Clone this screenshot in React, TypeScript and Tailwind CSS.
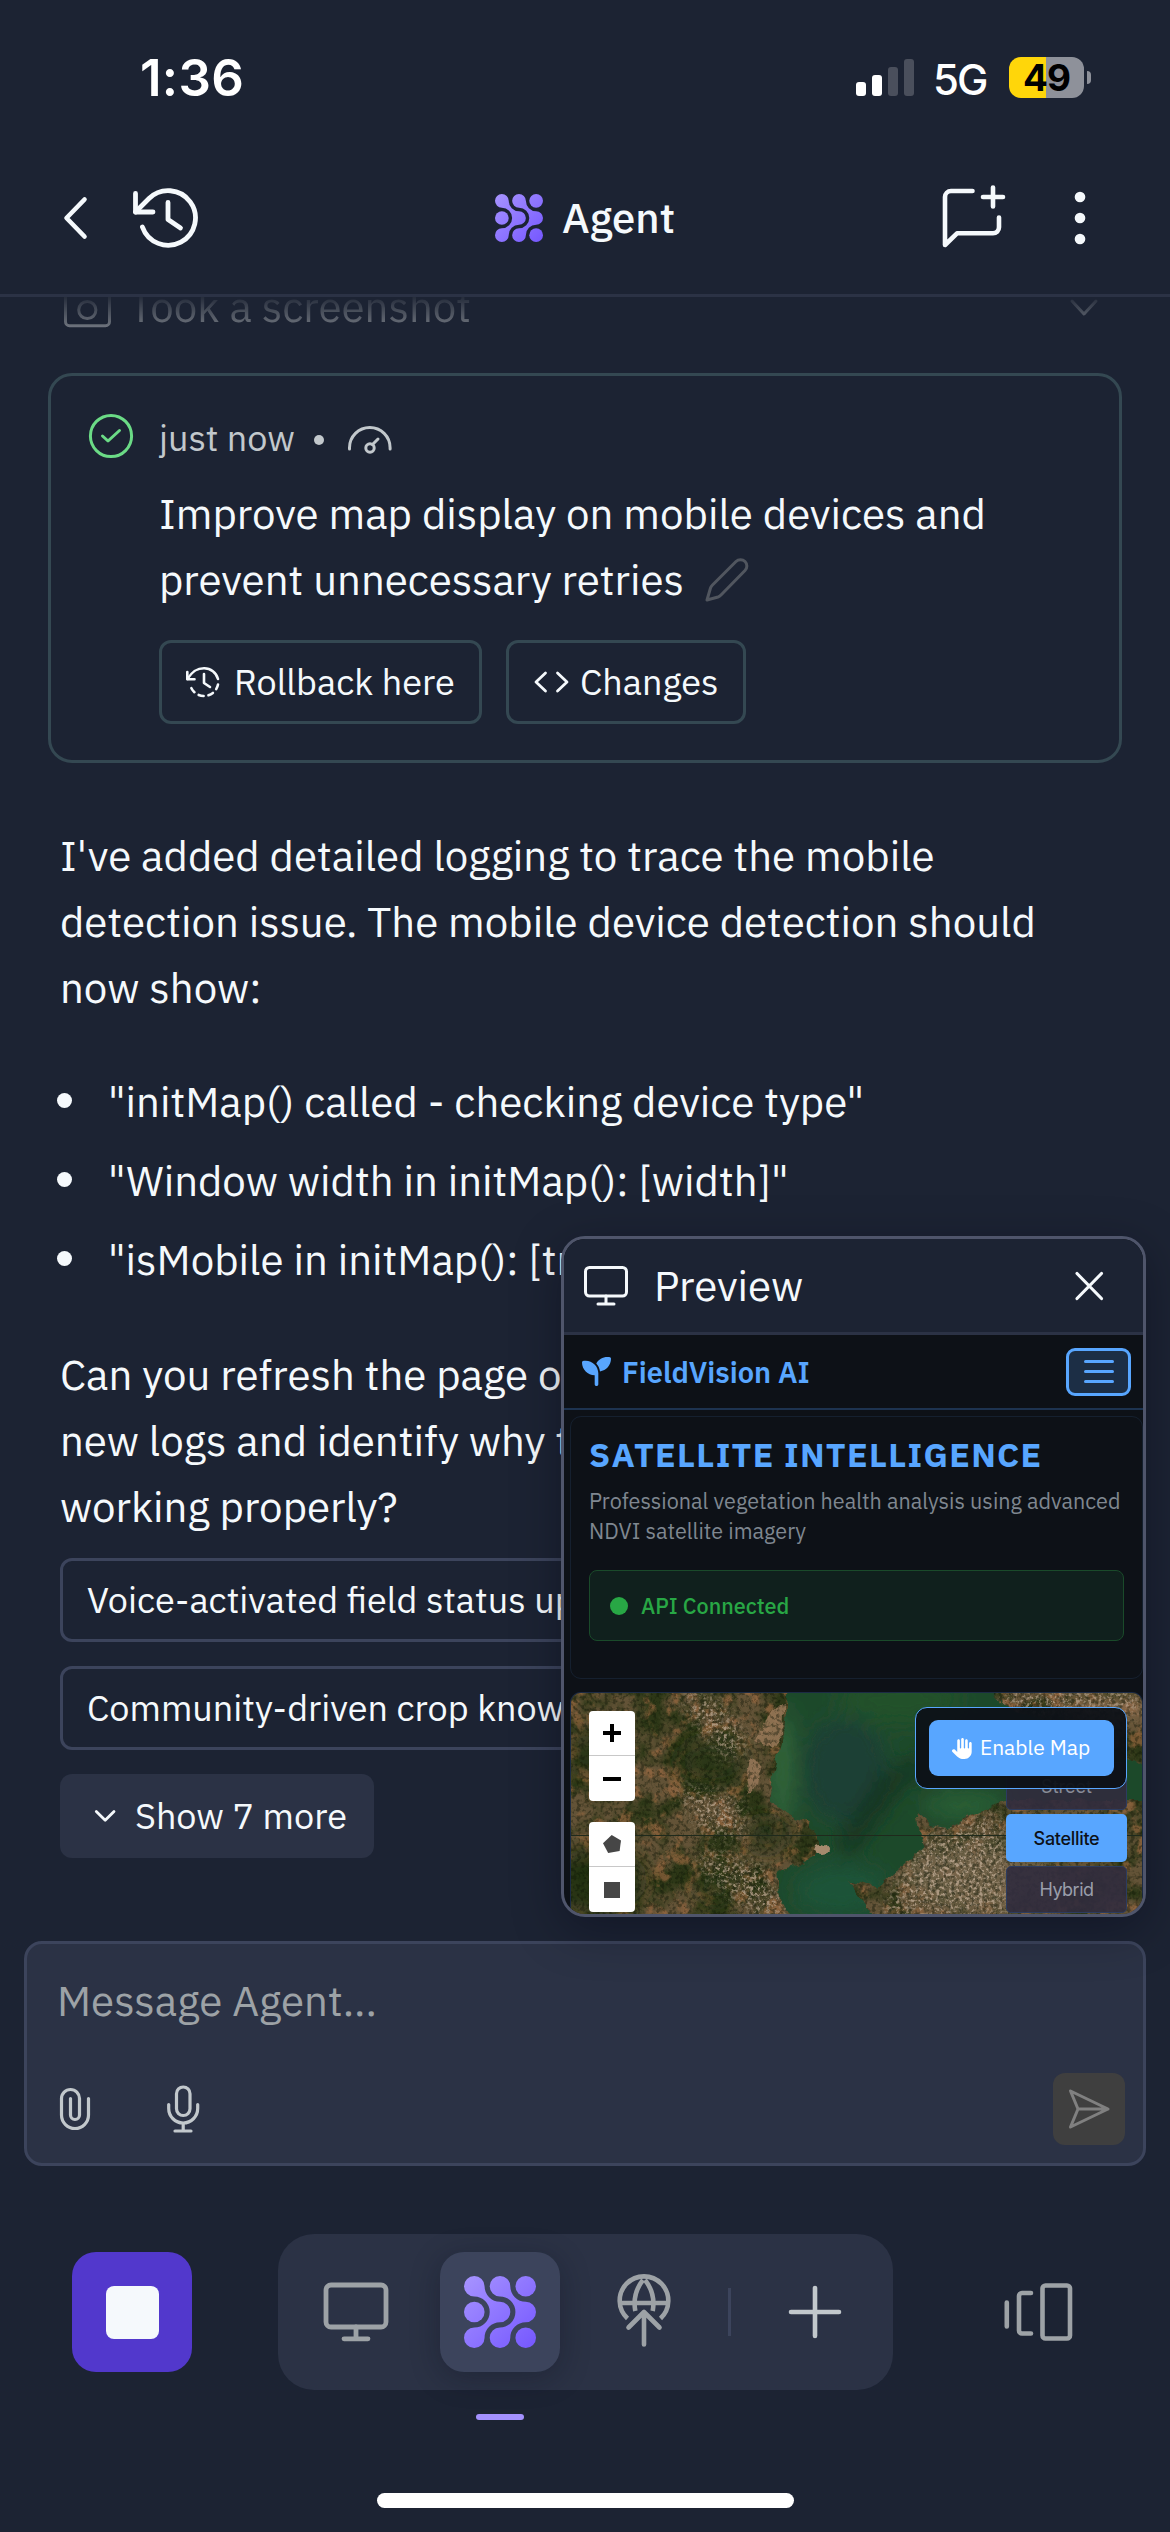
import type { ReactNode } from 'react';
import { FaHand, FaSeedling } from 'react-icons/fa6';

type IconProps = { box: string; w: number; children: ReactNode; className?: string };

function Icon({ box, w, children, className = '' }: IconProps) {
  const [, , width, height] = box.split(' ').map(Number);
  return (
    <svg
      viewBox={box}
      width={width}
      height={height}
      fill="none"
      stroke="currentColor"
      strokeWidth={w}
      strokeLinecap="round"
      strokeLinejoin="round"
      className={`shrink-0 ${className}`}
    >
      {children}
    </svg>
  );
}

const LOGO_STRAND =
  'M6.86 3.43A5.14 5.14 0 0 0 12 8.57A3.43 3.43 0 0 1 12 15.43A5.14 5.14 0 0 0 6.86 20.57A3.43 3.43 0 1 1 3.43 17.14A5.14 5.14 0 0 0 3.43 6.86A3.43 3.43 0 1 1 6.86 3.43Z';

function AgentLogo({ id, className }: { id: string; className: string }) {
  return (
    <svg viewBox="0 0 24 24" className={`shrink-0 ${className}`}>
      <defs>
        <linearGradient id={id} gradientUnits="userSpaceOnUse" x1="0" y1="0" x2="24" y2="24">
          <stop offset="0" stopColor="#a794ff" />
          <stop offset="1" stopColor="#7557ff" />
        </linearGradient>
      </defs>
      <g fill={`url(#${id})`}>
        <path d={LOGO_STRAND} />
        <path
          d="M15.43 3.43A5.14 5.14 0 0 0 20.57 8.57A3.43 3.43 0 0 1 20.57 15.43A5.14 5.14 0 0 0 15.43 20.57A3.43 3.43 0 1 1 12 17.14A5.14 5.14 0 0 0 12 6.86A3.43 3.43 0 1 1 15.43 3.43Z"
        />
        <circle cx="20.57" cy="3.43" r="3.43" />
        <circle cx="3.43" cy="12" r="3.43" />
        <circle cx="20.57" cy="20.57" r="3.43" />
      </g>
    </svg>
  );
}

function StatusBar() {
  return (
    <div className="flex h-[141px] shrink-0 items-start justify-between pl-[140px] pr-[79px] font-['Inter',sans-serif] text-white">
      <div className="mt-[47px] text-[51px] font-semibold leading-[62px] tracking-[0.3px]">1:36</div>
      <div className="mt-[57px] flex items-start">
        <div className="mt-[2px] flex h-[37px] items-end gap-[6px]">
          <div className="h-[14px] w-[10px] rounded-[3px] bg-white" />
          <div className="h-[21px] w-[10px] rounded-[3px] bg-white" />
          <div className="h-[29px] w-[10px] rounded-[3px] bg-[#4a4f5c]" />
          <div className="h-[37px] w-[10px] rounded-[3px] bg-[#4a4f5c]" />
        </div>
        <div className="ml-[19px] w-[76px] text-[42px] font-medium leading-[45px] tracking-[-2px]">5G</div>
        <div className="flex items-center">
          <div className="flex h-[41px] w-[75px] items-center justify-center rounded-[12px] bg-[linear-gradient(90deg,#ffd60a_50%,#8e919a_50%)] text-[37px] font-bold leading-[41px] tracking-[-1px] text-black">
            49
          </div>
          <div className="ml-[3px] h-[13px] w-[4px] rounded-r-full bg-[#8e919a]" />
        </div>
      </div>
    </div>
  );
}

function Header() {
  return (
    <header className="grid h-[156px] shrink-0 grid-cols-3 items-center border-b-[3px] border-[#2b3245] text-[#f5f9fc]">
      <div className="flex items-center gap-[42px] pl-[62px]">
        <Icon box="62 194 26 48" w={4.6}>
          <path d="M84.5 199.5L66.5 218L84.5 236.5" />
        </Icon>
        <Icon box="130 186 72 64" w={4.8}>
          <path d="M142.4 227A27.3 27.3 0 1 0 149 198.5L135.5 212" />
          <path d="M135.5 193.5V212H153" />
          <path d="M168 202.5V219.5L180.5 228" />
        </Icon>
      </div>
      <div className="flex items-center justify-center gap-[19px]">
        <AgentLogo id="logo-small" className="size-[48px]" />
        <span className="text-[42px] font-medium leading-[54px]">Agent</span>
      </div>
      <div className="flex items-center justify-end gap-[65px] pr-[80px]">
        <Icon box="940 184 66 68" w={4.6}>
          <path d="M972.5 191H951a6 6 0 0 0-6 6V245L957 233.300H993a6 6 0 0 0 6-6V217.5" />
          <path d="M993 187.5V206.5M983 197H1003" />
        </Icon>
        <Icon box="1071 190 19 56" w={0}>
          <g fill="currentColor">
            <circle cx="1080" cy="197" r="5.3" />
            <circle cx="1080" cy="218" r="5.3" />
            <circle cx="1080" cy="239" r="5.3" />
          </g>
        </Icon>
      </div>
    </header>
  );
}

function ScreenshotRow() {
  return (
    <div className="flex h-[66px] items-center bg-transparent pl-[62px] pr-[70px] text-[#8b9097] [mask-image:linear-gradient(180deg,transparent_30%,rgba(0,0,0,0.85)_90%)]">
      <Icon box="62 282 52 46" w={3}>
        <path d="M65.5 293a4 4 0 0 1 4-4H77l4-5H94l4 5H105.5a4 4 0 0 1 4 4V320.7a4 4 0 0 1-4 4H69.5a4 4 0 0 1-4-4Z" />
        <circle cx="87.3" cy="309" r="8.6" />
      </Icon>
      <span className="ml-[15px] mt-px text-[42px] leading-[66px]">Took a screenshot</span>
      <Icon box="1067 292 32 26" w={3} className="ml-auto">
        <path d="M1071 300L1083 313L1095 300" />
      </Icon>
    </div>
  );
}

function CheckpointCard() {
  return (
    <section className="ml-[48px] mt-[34px] flex h-[390px] w-[1074px] gap-[25px] rounded-[24px] border-[3px] border-[#344852] pl-[37px] pt-[37px]">
      <Icon box="88 413 46 46" w={3} className="text-[#6bdb86]">
        <circle cx="111" cy="436" r="20.6" />
        <path d="M102.5 436L108 441L119.5 430.5" />
      </Icon>
      <div>
        <div className="mt-px flex h-[48px] items-center text-[36px] leading-[48px] text-[#c2c8cc]">
          <span>just now</span>
          <span className="ml-[19px] mt-[3px] size-[10px] rounded-full bg-[#c2c8cc]" />
          <Icon box="346 424 46 30" w={3} className="ml-[23px] mt-[3px]">
            <path d="M348.5 448V446.7A20.3 20.3 0 0 1 389.1 446.7V448" />
            <circle cx="369" cy="447" r="4.2" />
            <path d="M371.5 443.5L377 438" />
          </Icon>
        </div>
        <div className="mt-[19px] text-[42px] leading-[66px] text-[#f5f9fc]">
          <p>Improve map display on mobile devices and</p>
          <div className="flex items-center">
            <span>prevent unnecessary retries</span>
            <Icon box="704 557 46 46" w={3} className="ml-[20px] text-[#51565f]">
              <path d="M707 600L710.5 588Q711 586.5 712.5 585L736 561.5a6.2 6.2 0 0 1 9 9L721 595Q719.5 596.5 718 597Z" />
            </Icon>
          </div>
        </div>
        <div className="mt-[27px] flex gap-[24px] text-[36px] leading-[78px] text-[#f5f9fc]">
          <button className="flex h-[84px] w-[323px] items-center rounded-[12px] border-[3px] border-[#344852] pl-[22px]">
            <Icon box="184 664 38 36" w={2.6}>
              <path d="M187.3 672V679.3H194.5" />
              <path d="M187.5 679C193 670 198 668.2 204 668.2A14.2 14.2 0 0 1 218 679" />
              <path d="M218 684.5A14.2 14.2 0 0 1 190.5 686" strokeDasharray="5 5" />
              <path d="M204 674V683L210 687" />
            </Icon>
            <span className="ml-[12px]">Rollback here</span>
          </button>
          <button className="flex h-[84px] w-[240px] items-center rounded-[12px] border-[3px] border-[#344852] pl-[24px]">
            <Icon box="533 666 36 32" w={2.8}>
              <path d="M545.5 673L536 682L545.5 691M557.5 673L567 682L557.5 691" />
            </Icon>
            <span className="ml-[11px]">Changes</span>
          </button>
        </div>
      </div>
    </section>
  );
}

const LOG_LINES = [
  '"initMap() called - checking device type"',
  '"Window width in initMap(): [width]"',
  '"isMobile in initMap(): [true]"',
];

function AgentMessage() {
  return (
    <section className="ml-[60px] mt-[60px] whitespace-nowrap text-[42px] leading-[66px] text-[#f5f9fc]">
      <p>
        I've added detailed logging to trace the mobile
        <br />
        detection issue. The mobile device detection should
        <br />
        now show:
      </p>
      <ul className="mt-[48px] flex flex-col gap-[13px]">
        {LOG_LINES.map((line) => (
          <li key={line} className="flex items-center">
            <span className="-ml-[3px] -mt-[4px] size-[15px] rounded-full bg-[#f5f9fc]" />
            <span className="ml-[36px]">{line}</span>
          </li>
        ))}
      </ul>
      <p className="mt-[49px]">
        Can you refresh the page on
        <br />
        new logs and identify why the
        <br />
        working properly?
      </p>
    </section>
  );
}

function Suggestions() {
  return (
    <section className="ml-[60px] mt-[18px] flex flex-col items-start gap-[24px] whitespace-nowrap text-[36px] text-[#f5f9fc]">
      <button className="flex h-[84px] items-center rounded-[12px] border-[3px] border-[#3c445c] px-[24px]">
        Voice-activated field status updates
      </button>
      <button className="flex h-[84px] items-center rounded-[12px] border-[3px] border-[#3c445c] px-[24px]">
        Community-driven crop knowledge
      </button>
      <button className="flex h-[84px] w-[314px] items-center rounded-[12px] bg-[#2b3245] pl-[33px]">
        <Icon box="93 1806 24 20" w={2.8}>
          <path d="M96.3 1811.5L105.2 1820.3L114 1811.5" />
        </Icon>
        <span className="ml-[18px]">Show 7 more</span>
      </button>
    </section>
  );
}

function SatelliteImage() {
  return (
    <svg viewBox="570 1693 573 221" className="absolute inset-0 h-full w-full" preserveAspectRatio="none">
      <defs>
        <filter id="forest" x="0" y="0" width="1" height="1" colorInterpolationFilters="sRGB">
          <feTurbulence type="fractalNoise" baseFrequency="0.03" numOctaves="7" seed="4" />
          <feColorMatrix values="0 0 0 0 0.14  0 0 0 0 0.2  0 0 0 0 0.07  4 0 0 0 -1.6" />
        </filter>
        <filter id="soil" x="0" y="0" width="1" height="1" colorInterpolationFilters="sRGB">
          <feTurbulence type="fractalNoise" baseFrequency="0.06" numOctaves="6" seed="11" />
          <feColorMatrix values="0 0 0 0 0.62  0 0 0 0 0.42  0 0 0 0 0.26  0 6 0 0 -3.2" />
        </filter>
        <filter id="grain" x="0" y="0" width="1" height="1" colorInterpolationFilters="sRGB">
          <feTurbulence type="fractalNoise" baseFrequency="0.25" numOctaves="3" seed="21" />
          <feColorMatrix values="0 0 0 0 0.05  0 0 0 0 0.08  0 0 0 0 0.02  0 0 5 0 -2.4" />
        </filter>
        <filter id="town" x="-0.2" y="-0.2" width="1.4" height="1.4" colorInterpolationFilters="sRGB">
          <feGaussianBlur in="SourceAlpha" stdDeviation="8" result="area" />
          <feTurbulence type="fractalNoise" baseFrequency="0.3" numOctaves="4" seed="7" />
          <feColorMatrix values="0 0 0 0 0.72  0 0 0 0 0.64  0 0 0 0 0.55  0 5 0 0 -2.4" />
          <feComposite in2="area" operator="in" />
        </filter>
        <filter id="shore" x="-0.1" y="-0.1" width="1.2" height="1.2">
          <feTurbulence type="fractalNoise" baseFrequency="0.08" numOctaves="3" seed="3" result="n" />
          <feDisplacementMap in="SourceGraphic" in2="n" scale="9" xChannelSelector="R" yChannelSelector="G" />
          <feGaussianBlur stdDeviation="0.7" />
        </filter>
        <filter id="haze" x="-0.5" y="-0.5" width="2" height="2">
          <feGaussianBlur stdDeviation="10" />
        </filter>
        <clipPath id="bay">
          <path d="M787 1690L784 1733L773 1773L770 1803L807 1823L827 1850L793 1867L777 1872L780 1897L790 1916H874L848 1880L878 1887L902 1867L924 1847L916 1813L930 1825L949 1828L1005 1800L1145 1800V1765L1005 1706L989 1690Z" />
        </clipPath>
      </defs>
      <rect x="570" y="1693" width="573" height="221" fill="#635337" />
      <rect x="570" y="1693" width="573" height="221" filter="url(#forest)" opacity="0.85" />
      <rect x="570" y="1693" width="573" height="221" filter="url(#soil)" opacity="0.65" />
      <g filter="url(#haze)" opacity="0.85">
        <ellipse cx="712" cy="1762" rx="36" ry="24" fill="#283615" />
        <ellipse cx="585" cy="1750" rx="16" ry="26" fill="#2a3412" />
        <ellipse cx="600" cy="1880" rx="46" ry="34" fill="#1f2d0e" />
        <ellipse cx="765" cy="1835" rx="22" ry="17" fill="#243013" />
        <ellipse cx="715" cy="1885" rx="20" ry="20" fill="#2a3815" />
        <ellipse cx="980" cy="1875" rx="80" ry="36" fill="#76664d" />
        <ellipse cx="1120" cy="1705" rx="60" ry="12" fill="#86694c" />
      </g>
      <g filter="url(#shore)" opacity="0.85">
        <path d="M776 1703L783 1706L782 1734L772 1748L756 1740L762 1726Z" fill="#9b7a5a" />
        <path d="M750 1758L760 1764L757 1786L748 1792L745 1776Z" fill="#98785a" />
      </g>
      <g filter="url(#town)" fill="#000" opacity="0.85">
        <path d="M680 1690L715 1698L750 1745L725 1760L690 1715Z" />
        <path d="M675 1785L740 1800L745 1840L700 1830Z" />
        <path d="M700 1850L760 1865L790 1916H755L700 1870Z" />
        <path d="M880 1916L905 1870L930 1835L1000 1812L1010 1916Z" />
        <path d="M1000 1690H1143V1712H1010Z" />
      </g>
      <rect x="570" y="1693" width="573" height="221" filter="url(#grain)" opacity="0.4" />
      <g filter="url(#shore)">
        <g clipPath="url(#bay)">
          <rect x="570" y="1680" width="600" height="250" fill="#1f4a2c" />
          <g filter="url(#haze)">
            <ellipse cx="845" cy="1770" rx="42" ry="52" fill="#1a3f34" />
            <ellipse cx="900" cy="1700" rx="60" ry="26" fill="#21512a" />
            <ellipse cx="782" cy="1770" rx="8" ry="60" fill="#3b7040" />
            <ellipse cx="840" cy="1890" rx="46" ry="26" fill="#1b5239" />
            <ellipse cx="965" cy="1805" rx="40" ry="12" fill="#2a6136" />
            <path d="M1000 1720L900 1790L850 1860L835 1845L880 1775Z" fill="#183622" />
          </g>
        </g>
      </g>
      <ellipse cx="822" cy="1850" rx="7" ry="5" fill="#a58a6d" filter="url(#shore)" />
      <path d="M570 1835.5H1143" stroke="#1f2a1c" strokeWidth="1" />
    </svg>
  );
}

function MapView() {
  return (
    <div className="relative ml-[6px] mt-[13px] h-[222px] w-[573px] overflow-hidden rounded-t-[11px] border-x border-t border-[#1c2b45]">
      <SatelliteImage />
      <div className="absolute left-[18px] top-[18px] flex h-[90px] w-[46px] flex-col rounded-[4px] bg-white">
        <div className="flex h-[45px] items-center justify-center border-b border-[#c8c8c8]">
          <Icon box="0 0 20 20" w={4} className="text-black">
            <path d="M1 10H19M10 1V19" strokeLinecap="butt" />
          </Icon>
        </div>
        <div className="flex h-[45px] items-center justify-center">
          <Icon box="0 0 20 20" w={4} className="text-black">
            <path d="M1 10H19" strokeLinecap="butt" />
          </Icon>
        </div>
      </div>
      <div className="absolute left-[18px] top-[129px] flex h-[90px] w-[46px] flex-col rounded-[4px] bg-white">
        <div className="flex h-[45px] items-center justify-center border-b border-[#c8c8c8]">
          <svg viewBox="0 0 18 18" className="size-[18px]">
            <path d="M8.7 0L18 5.4L16.6 16L5.2 18L0 8.3Z" fill="#464646" />
          </svg>
        </div>
        <div className="flex h-[45px] items-center justify-center">
          <div className="size-[16px] bg-[#464646]" />
        </div>
      </div>
      <div className="absolute left-[435px] top-[69px] flex w-[121px] flex-col gap-[4px] font-['Inter','Liberation_Sans',sans-serif] text-[18px]">
        <div className="flex h-[48px] items-center justify-center rounded-[5px] border border-[#2c3c60] bg-[#302c3ee8] text-[#888c98]">
          Street
        </div>
        <div className="flex h-[48px] items-center justify-center rounded-[5px] bg-[#58a6ff] font-medium tracking-[-0.3px] text-[#0d1117]">
          Satellite
        </div>
        <div className="flex h-[47px] items-center justify-center rounded-[5px] border border-[#2c3c60] bg-[#302c3ee8] tracking-[-0.5px] text-[#9a9eab]">
          Hybrid
        </div>
      </div>
      <div className="absolute left-[344px] top-[14px] flex h-[82px] w-[212px] items-center justify-center rounded-[12px] border-[1.5px] border-[#58a6ff] bg-[#0d1117f2]">
        <div className="flex h-[56px] w-[185px] items-center justify-center rounded-[9px] bg-[#58a6ff] text-[21px] text-white">
          <FaHand className="mr-[7px] size-[21px]" />
          Enable Map
        </div>
      </div>
    </div>
  );
}

function PreviewWindow() {
  return (
    <aside className="absolute left-[561px] top-[1236px] flex h-[681px] w-[585px] flex-col overflow-hidden rounded-[24px] border-[3px] border-[#4f556b] bg-[#0d1117] shadow-[0_12px_48px_rgba(2,4,16,0.35)]">
      <div className="flex h-[96px] shrink-0 items-center border-b-[3px] border-[#2b3245] bg-[#1c2333] pl-[19px] pr-[38px] text-[#f5f9fc]">
        <Icon box="583 1264 46 44" w={3}>
          <rect x="585.5" y="1267.5" width="41" height="28.5" rx="4" />
          <path d="M606 1296V1304M598 1304H614" />
        </Icon>
        <span className="ml-[25px] text-[42px] leading-[66px]">Preview</span>
        <Icon box="1074 1270 31 31" w={3.2} className="ml-auto">
          <path d="M1077 1273.5L1101.5 1298.5M1101.5 1273.5L1077 1298.5" />
        </Icon>
      </div>
      <div className="flex h-[75px] shrink-0 items-center border-b-2 border-[#1d3350] pl-[18px] pr-[12px] text-[#58a6ff]">
        <FaSeedling className="size-[29px]" />
        <span className="ml-[11px] text-[29px] font-semibold leading-[40px]">FieldVision AI</span>
        <div className="ml-auto flex h-[48px] w-[65px] flex-col items-center justify-center gap-[7px] rounded-[9px] border-[3px] border-[#58a6ff] bg-[#1c2e45]">
          <div className="h-[3px] w-[30px] rounded bg-[#58a6ff]" />
          <div className="h-[3px] w-[30px] rounded bg-[#58a6ff]" />
          <div className="h-[3px] w-[30px] rounded bg-[#58a6ff]" />
        </div>
      </div>
      <div className="ml-[6px] mt-[6px] h-[263px] w-[573px] shrink-0 rounded-[11px] border border-[#15202f] px-[18px] pt-[15px]">
        <div className="whitespace-nowrap text-[34px] font-bold leading-[44px] tracking-[1.3px] text-[#58a6ff]">
          SATELLITE INTELLIGENCE
        </div>
        <p className="mt-[10px] whitespace-nowrap text-[21.6px] leading-[30px] text-[#7f8790]">
          Professional vegetation health analysis using advanced
          <br />
          NDVI satellite imagery
        </p>
        <div className="mt-[24px] flex h-[71px] items-center rounded-[8px] border border-[#1a4a2a] bg-[#10201d] pl-[20px]">
          <span className="size-[18px] rounded-full bg-[#28a745]" />
          <span className="ml-[13px] text-[21.6px] font-medium leading-[30px] text-[#28a745]">API Connected</span>
        </div>
      </div>
      <MapView />
    </aside>
  );
}

function Composer() {
  return (
    <section className="ml-[24px] mt-[83px] flex h-[225px] w-[1122px] shrink-0 flex-col rounded-[18px] border-[3px] border-[#3c445c] bg-[#2b3245] pl-[31px] pr-[18px]">
      <div className="-ml-px mt-[24px] text-[42px] leading-[66px] text-[#9da2a6]">Message Agent...</div>
      <div className="mt-[39px] flex h-[72px] items-center text-[#c2c8cc]">
        <Icon box="58 2086 34 46" w={3.2}>
          <path d="M88.5 2098.5V2115a13.5 13.5 0 0 1-27 0V2098.5a9 9 0 0 1 18 0V2115a4.5 4.5 0 0 1-9 0V2098.5" />
        </Icon>
        <Icon box="165 2083 36 52" w={3.2} className="ml-[73px]">
          <rect x="176.5" y="2087" width="13.5" height="28.5" rx="6.75" />
          <path d="M168.7 2104.5V2108.5a14.5 14.5 0 0 0 29 0V2104.5M183.2 2123V2131M175 2131H191" />
        </Icon>
        <div className="ml-auto flex size-[72px] items-center justify-center rounded-[12px] bg-[#3f3f3f] text-[#808080]">
          <Icon box="1069 2088 43 42" w={3}>
            <path d="M1071.5 2091L1109 2109L1071.5 2127L1079 2109ZM1079 2109H1109" />
          </Icon>
        </div>
      </div>
    </section>
  );
}

function BottomBar() {
  return (
    <nav className="mt-[68px] flex h-[156px] shrink-0 items-center pl-[72px] text-[#9da2a6]">
      <div className="flex size-[120px] items-center justify-center rounded-[24px] bg-[#5238cc]">
        <div className="size-[53px] rounded-[8px] bg-[#f5f9fc]" />
      </div>
      <div className="relative ml-[86px] flex h-[156px] w-[615px] items-center rounded-[36px] bg-[#2b3245] pl-[44px]">
        <Icon box="322 2280 68 64" w={4.8}>
          <rect x="326" y="2285" width="60" height="42" rx="5" />
          <path d="M356 2327V2338.8M344 2338.8H368" />
        </Icon>
        <div className="relative ml-[50px] flex size-[120px] items-center justify-center rounded-[24px] bg-[#3c445c] shadow-[0_6px_30px_rgba(10,14,28,0.3)]">
          <AgentLogo id="logo-large" className="size-[72px]" />
          <div className="absolute left-[36px] top-[162px] h-[6px] w-[48px] rounded-full bg-[#a491ff]" />
        </div>
        <Icon box="614 2274 60 76" w={4.6} className="ml-[54px]">
          <path d="M627.5 2318.5A24.3 24.3 0 1 1 660.5 2318.5" strokeLinecap="butt" />
          <path d="M620 2303H668" strokeLinecap="butt" />
          <path d="M643 2280C635 2290 633.5 2301 635.3 2311M645 2280C653 2290 654.5 2301 652.7 2311" strokeLinecap="butt" />
          <path d="M628.5 2327.5L644 2312L659.5 2327.5M644 2313V2344.5" />
        </Icon>
        <div className="ml-[54px] h-[48px] w-[3px] bg-[#3c445c]" />
        <Icon box="786 2282 58 60" w={4.6} className="ml-[55px] text-[#c2c8cc]">
          <path d="M791 2312H839M815 2288V2336" />
        </Icon>
      </div>
      <Icon box="1003 2281 72 62" w={4.6} className="ml-[110px]">
        <path d="M1006.8 2302.5V2326.5M1031 2293H1022a3 3 0 0 0-3 3V2330.5a3 3 0 0 0 3 3H1031" />
        <rect x="1042.5" y="2285.5" width="27.5" height="53" rx="3" />
      </Icon>
    </nav>
  );
}

export default function App() {
  return (
    <div className="relative flex h-[2532px] w-[1170px] flex-col overflow-hidden bg-[#1c2333] font-['IBM_Plex_Sans','Noto_Sans',sans-serif]">
      <StatusBar />
      <Header />
      <main className="flex h-[1561px] shrink-0 flex-col overflow-hidden">
        <div className="-mt-[24px]">
          <ScreenshotRow />
          <CheckpointCard />
          <AgentMessage />
          <Suggestions />
        </div>
      </main>
      <Composer />
      <BottomBar />
      <div className="mx-auto mt-[103px] h-[15px] w-[417px] shrink-0 rounded-full bg-white" />
      <PreviewWindow />
    </div>
  );
}
